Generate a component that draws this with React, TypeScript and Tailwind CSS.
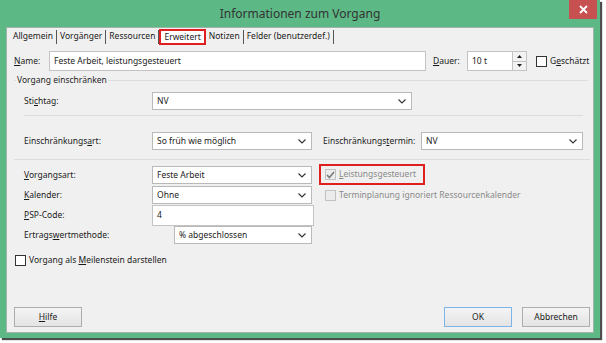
import React from 'react';

const font = "font-['Noto_Sans','Liberation_Sans',sans-serif]";

function U({ children }: { children: React.ReactNode }) {
  return <span className="underline underline-offset-[1px]">{children}</span>;
}

function Chevron() {
  return (
    <svg width="8" height="5" viewBox="0 0 8 5" className="shrink-0">
      <polyline points="0.5,0.5 4,4 7.5,0.5" fill="none" stroke="#333" strokeWidth="1.1" />
    </svg>
  );
}

function Select({ value, w }: { value: string; w: string }) {
  return (
    <div className={`${w} h-[18px] bg-white border border-[#b9b9b9] flex items-center justify-between pl-[4px] pr-[5px]`}>
      <span>{value}</span>
      <Chevron />
    </div>
  );
}

function Input({ value, w, h = 'h-[20px]' }: { value: string; w: string; h?: string }) {
  return (
    <div className={`${w} ${h} bg-white border border-[#c3c3c3] flex items-center pl-[4px]`}>{value}</div>
  );
}

function Box({ checked, disabled }: { checked?: boolean; disabled?: boolean }) {
  return (
    <div
      className={`w-[11px] h-[11px] shrink-0 border flex items-center justify-center ${
        disabled ? 'border-[#c2c2c2] bg-[#ececec]' : 'border-[#333] bg-white'
      }`}
    >
      {checked && (
        <svg width="9" height="8" viewBox="0 0 9 8">
          <polyline points="1,4 3.4,6.5 8,1" fill="none" stroke="#7a7a7a" strokeWidth="1.6" />
        </svg>
      )}
    </div>
  );
}

function Button({ label, primary }: { label: React.ReactNode; primary?: boolean }) {
  return (
    <div
      className={`w-[68px] h-[20px] flex items-center justify-center bg-gradient-to-b from-[#f4f4f4] to-[#e4e4e4] border ${
        primary ? 'border-[#7eb4ea]' : 'border-[#adadad]'
      }`}
    >
      {label}
    </div>
  );
}

const tabs = ['Allgemein', 'Vorgänger', 'Ressourcen', 'Erweitert', 'Notizen', 'Felder (benutzerdef.)'];

export default function App() {
  return (
    <div className={`w-[606px] h-[343px] bg-white ${font} text-[8.5px] text-[#1a1a1a]`}>
      <div className="w-[600px] h-[338px] bg-[#5cb885] shadow-[2px_2px_1px_#4d4d4d] flex flex-col">
        <div className="h-[27px] relative flex items-center justify-center text-[12px] text-[#333]">
          Informationen zum Vorgang
          <div className="absolute right-[3px] top-0 w-[28px] h-[19px] bg-[#c75050] flex items-center justify-center">
            <svg width="9" height="9" viewBox="0 0 9 9">
              <path d="M1 1L8 8M8 1L1 8" stroke="#fff" strokeWidth="1.8" />
            </svg>
          </div>
        </div>

        <div className="flex-1 mx-[6px] mb-[5px] bg-[#f0f0f0] border border-[#9fb3a6] flex flex-col">
          {/* tabs */}
          <div className="h-[17px] flex items-center pl-[3px]">
            {tabs.map((t) =>
              t === 'Erweitert' ? (
                <div key={t} className="h-[16px] mt-[1px] px-[3px] border-2 border-[#e02020] bg-white flex items-center">
                  {t}
                </div>
              ) : (
                <div key={t} className="h-[14px] px-[3px] border-r border-[#555] flex items-center">
                  {t}
                </div>
              )
            )}
          </div>

          <div className="flex-1 flex flex-col pl-[7px] pr-[3px] pb-[5px]">
            {/* Name row */}
            <div className="mt-[6px] flex items-center">
              <span className="w-[35px]">
                <U>N</U>ame:
              </span>
              <Input value="Feste Arbeit, leistungsgesteuert" w="w-[377px]" />
              <span className="ml-[7px] w-[34px]">
                <U>D</U>auer:
              </span>
              <Input value="10 t" w="w-[46px]" />
              <div className="w-[14px] h-[20px] border border-[#c3c3c3] border-l-0 flex flex-col">
                <div className="flex-1 bg-[#f3f3f3] border-b border-[#c3c3c3] flex items-center justify-center">
                  <svg width="5" height="3" viewBox="0 0 5 3"><polygon points="2.5,0 5,3 0,3" fill="#222" /></svg>
                </div>
                <div className="flex-1 bg-[#f3f3f3] flex items-center justify-center">
                  <svg width="5" height="3" viewBox="0 0 5 3"><polygon points="0,0 5,0 2.5,3" fill="#222" /></svg>
                </div>
              </div>
              <div className="ml-[9px]">
                <Box />
              </div>
              <span className="ml-[3px]">
                G<U>e</U>schätzt
              </span>
            </div>

            {/* group label */}
            <div className="mt-[3px] h-[12px] flex items-center text-[#1e1e1e]">
              <div className="w-[2px] h-px bg-[#dcdcdc]" />
              <span className="px-[1px]">Vorgang einschränken</span>
              <div className="flex-1 h-px bg-[#dcdcdc] mr-[2px]" />
            </div>

            {/* Stichtag */}
            <div className="mt-[6px] ml-[10px] flex items-center">
              <span className="w-[128px]">
                Sti<U>c</U>htag:
              </span>
              <Select value="NV" w="w-[260px]" />
            </div>
            <div className="mt-[5px] ml-[10px] w-[559px] h-px bg-[#dcdcdc]" />

            {/* Einschränkungsart */}
            <div className="mt-[16px] ml-[10px] flex items-center">
              <span className="w-[128px]">
                Einschränkungs<U>a</U>rt:
              </span>
              <Select value="So früh wie möglich" w="w-[160px]" />
              <span className="ml-[11px] w-[98px]">
                Einschränkungs<U>t</U>ermin:
              </span>
              <Select value="NV" w="w-[162px]" />
            </div>
            <div className="mt-[9px] w-[576px] h-px bg-[#dcdcdc]" />

            {/* lower block */}
            <div className="flex">
              <div className="ml-[10px] flex flex-col">
                <div className="mt-[6px] flex items-center">
                  <span className="w-[128px]">
                    <U>V</U>organgsart:
                  </span>
                  <Select value="Feste Arbeit" w="w-[160px]" />
                </div>
                <div className="mt-[2px] flex items-center">
                  <span className="w-[128px]">
                    <U>K</U>alender:
                  </span>
                  <Select value="Ohne" w="w-[160px]" />
                </div>
                <div className="mt-[1px] flex items-center">
                  <span className="w-[128px]">
                    <U>P</U>SP-Code:
                  </span>
                  <Input value="4" w="w-[162px]" h="h-[21px]" />
                </div>
                <div className="mt-0 flex items-center">
                  <span className="w-[150px]">
                    Ertrags<U>w</U>ertmethode:
                  </span>
                  <Select value="% abgeschlossen" w="w-[138px]" />
                </div>
              </div>

              <div className="ml-[5px] flex flex-col">
                <div className="mt-[4px] w-[106px] h-[21px] border-2 border-[#e02020] flex items-center pl-[4px]">
                  <Box checked disabled />
                  <span className="ml-[3px] text-[#8a8a8a]">
                    <U>L</U>eistungsgesteuert
                  </span>
                </div>
                <div className="mt-[4px] flex items-center pl-[6px]">
                  <Box disabled />
                  <span className="ml-[3px] text-[#8a8a8a]">Terminplanung ignoriert Ressourcenkalender</span>
                </div>
              </div>
            </div>

            <div className="mt-[10px] ml-[1px] flex items-center">
              <Box />
              <span className="ml-[3px]">
                Vorgang als <U>M</U>eilenstein darstellen
              </span>
            </div>

            <div className="mt-auto flex items-center">
              <Button label={<span><U>H</U>ilfe</span>} />
              <div className="flex-1" />
              <Button label="OK" primary />
              <div className="w-[10px]" />
              <Button label="Abbrechen" />
            </div>
          </div>
        </div>
      </div>
    </div>
  );
}
